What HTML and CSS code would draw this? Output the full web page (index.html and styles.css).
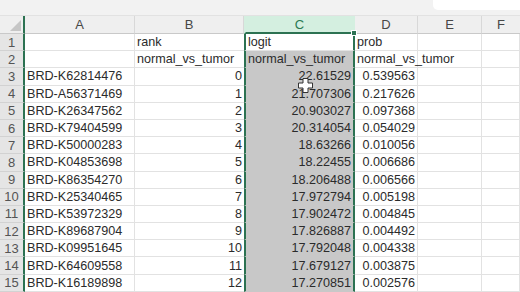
FILE: index.html
```html
<!DOCTYPE html>
<html>
<head>
<meta charset="utf-8">
<link rel="stylesheet" href="styles.css">
</head>
<body>
<div class="app">
  <div class="topbar"><div class="namebox"></div></div>
  <div class="sheet">
    <div class="hd corner"><span class="tri"></span></div>
    <div class="hd">A</div>
    <div class="hd">B</div>
    <div class="hd hdsel">C</div>
    <div class="hd">D</div>
    <div class="hd">E</div>
    <div class="hd last">F</div>

    <div class="rh">1</div><div class="cell"></div><div class="cell b">rank</div><div class="cell c active">logit</div><div class="cell">prob</div><div class="cell"></div><div class="cell"></div>
    <div class="rh">2</div><div class="cell"></div><div class="cell b">normal_vs_tumor</div><div class="cell c">normal_vs_tumor</div><div class="cell">normal_vs_tumor</div><div class="cell"></div><div class="cell"></div>
    <div class="rh">3</div><div class="cell">BRD-K62814476</div><div class="cell b num">0</div><div class="cell c num">22.61529</div><div class="cell num">0.539563</div><div class="cell"></div><div class="cell"></div>
    <div class="rh">4</div><div class="cell">BRD-A56371469</div><div class="cell b num">1</div><div class="cell c num">21.707306</div><div class="cell num">0.217626</div><div class="cell"></div><div class="cell"></div>
    <div class="rh">5</div><div class="cell">BRD-K26347562</div><div class="cell b num">2</div><div class="cell c num">20.903027</div><div class="cell num">0.097368</div><div class="cell"></div><div class="cell"></div>
    <div class="rh">6</div><div class="cell">BRD-K79404599</div><div class="cell b num">3</div><div class="cell c num">20.314054</div><div class="cell num">0.054029</div><div class="cell"></div><div class="cell"></div>
    <div class="rh">7</div><div class="cell">BRD-K50000283</div><div class="cell b num">4</div><div class="cell c num">18.63266</div><div class="cell num">0.010056</div><div class="cell"></div><div class="cell"></div>
    <div class="rh">8</div><div class="cell">BRD-K04853698</div><div class="cell b num">5</div><div class="cell c num">18.22455</div><div class="cell num">0.006686</div><div class="cell"></div><div class="cell"></div>
    <div class="rh">9</div><div class="cell">BRD-K86354270</div><div class="cell b num">6</div><div class="cell c num">18.206488</div><div class="cell num">0.006566</div><div class="cell"></div><div class="cell"></div>
    <div class="rh">10</div><div class="cell">BRD-K25340465</div><div class="cell b num">7</div><div class="cell c num">17.972794</div><div class="cell num">0.005198</div><div class="cell"></div><div class="cell"></div>
    <div class="rh">11</div><div class="cell">BRD-K53972329</div><div class="cell b num">8</div><div class="cell c num">17.902472</div><div class="cell num">0.004845</div><div class="cell"></div><div class="cell"></div>
    <div class="rh">12</div><div class="cell">BRD-K89687904</div><div class="cell b num">9</div><div class="cell c num">17.826887</div><div class="cell num">0.004492</div><div class="cell"></div><div class="cell"></div>
    <div class="rh">13</div><div class="cell">BRD-K09951645</div><div class="cell b num">10</div><div class="cell c num">17.792048</div><div class="cell num">0.004338</div><div class="cell"></div><div class="cell"></div>
    <div class="rh">14</div><div class="cell">BRD-K64609558</div><div class="cell b num">11</div><div class="cell c num">17.679127</div><div class="cell num">0.003875</div><div class="cell"></div><div class="cell"></div>
    <div class="rh">15</div><div class="cell">BRD-K16189898</div><div class="cell b num">12</div><div class="cell c num">17.270851</div><div class="cell num">0.002576</div><div class="cell"></div><div class="cell"></div>
  </div>
  <svg class="cursor" width="15" height="15" viewBox="0 0 15 15">
    <polygon points="5,0.5 10,0.5 10,5 14.5,5 14.5,10 10,10 10,14.5 5,14.5 5,10 0.5,10 0.5,5 5,5" fill="#fff" stroke="#333" stroke-width="1"/>
  </svg>
</div>
</body>
</html>
```

FILE: styles.css
```css
html, body {
  margin: 0;
  padding: 0;
  background: #fff;
  overflow: hidden;
}
.app {
  position: relative;
  width: 520px;
  height: 292px;
  overflow: hidden;
  font-family: "Liberation Sans", Arial, sans-serif;
  font-size: 12.6px;
  color: #2b2b2b;
}
.topbar {
  height: 16px;
  background: #f2f2f2;
  border-bottom: 1px solid #e2e2e2;
  box-sizing: border-box;
  display: flex;
  justify-content: flex-end;
}
.namebox {
  width: 87px;
  height: 10px;
  background: #fff;
  border-bottom-left-radius: 5px;
}
.sheet {
  display: grid;
  grid-template-columns: 25px 110px 109px 111px 63px 64px 1fr;
  grid-template-rows: 18px;
  grid-auto-rows: 17.2px;
}
.hd {
  box-sizing: border-box;
  background: #efefef;
  border-right: 1px solid #d8d8d8;
  border-bottom: 1px solid #c9c9c9;
  color: #474747;
  font-size: 13px;
  display: flex;
  align-items: center;
  justify-content: center;
}
.hd.last {
  border-right: none;
}
.corner {
  align-items: flex-end;
  justify-content: flex-end;
  padding: 0 2px 2px 0;
  border-right: 2px solid #2c7252;
}
.tri {
  width: 11px;
  height: 11px;
  background: #c6c6c6;
  clip-path: polygon(100% 0, 100% 100%, 0 100%);
}
.hdsel {
  position: relative;
  background: #d4efe0;
  color: #2a7a52;
  border-left: 2px solid #d4efe0;
  border-right: 2px solid #d4efe0;
  border-bottom: 2px solid #2c7252;
}
.hdsel::after {
  content: "";
  position: absolute;
  right: -4px;
  bottom: -4px;
  width: 4px;
  height: 4px;
  background: #2c7252;
  border: 1px solid #fff;
  z-index: 3;
}
.rh {
  box-sizing: border-box;
  background: #e5e5e5;
  border-right: 2px solid #2c7252;
  border-bottom: 1px solid #d2d2d2;
  color: #545454;
  font-size: 13px;
  display: flex;
  align-items: center;
  justify-content: center;
}
.cell {
  box-sizing: border-box;
  border-right: 1px solid #e2e2e2;
  border-bottom: 1px solid #e2e2e2;
  padding: 0 2px;
  display: flex;
  align-items: center;
  white-space: nowrap;
  overflow: visible;
}
.cell.b {
  border-right: none;
}
.cell.c {
  background: #c8c8c8;
  border-left: 2px solid #2c7252;
  border-right: 2px solid #2c7252;
  border-bottom-color: #c8c8c8;
  position: relative;
  z-index: 1;
}
.cell.c.active {
  background: #fff;
  border-bottom-color: #e2e2e2;
}
.num {
  justify-content: flex-end;
  padding-right: 2px;
}
.cursor {
  position: absolute;
  left: 298px;
  top: 78px;
  z-index: 5;
}
```
